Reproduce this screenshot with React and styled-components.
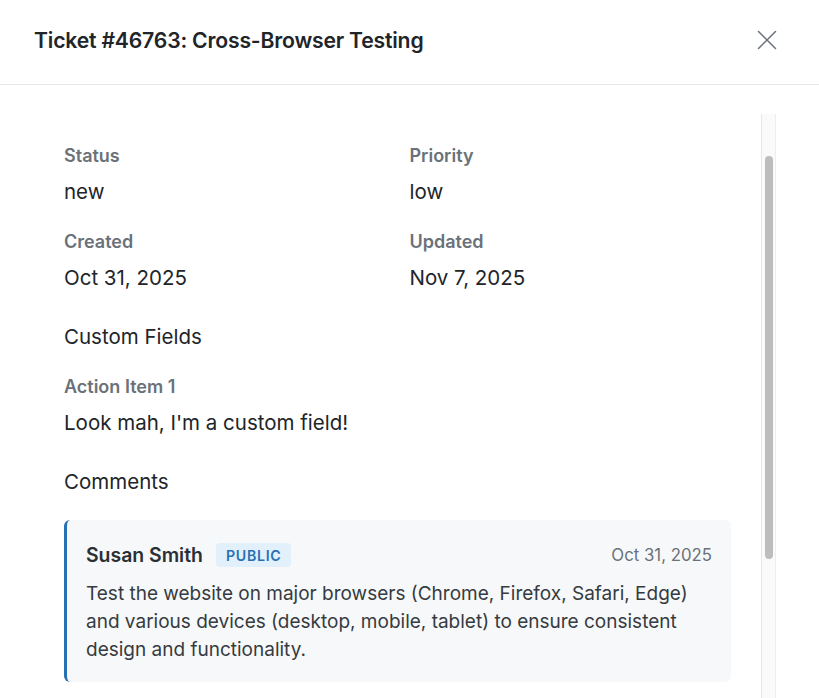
import React from "react";
import styled, { createGlobalStyle } from "styled-components";

const GlobalStyle = createGlobalStyle`
  html, body {
    margin: 0;
    padding: 0;
    background: #ffffff;
    font-family: "Inter", "Noto Sans", sans-serif;
    -webkit-font-smoothing: antialiased;
  }
  * { box-sizing: border-box; }
`;

const Modal = styled.div`
  display: flex;
  flex-direction: column;
  height: 100vh;
  overflow: hidden;
  background: #ffffff;
`;

const Header = styled.header`
  display: flex;
  align-items: center;
  justify-content: space-between;
  height: 85px;
  padding: 0 42px 5px 34px;
  border-bottom: 1px solid #e6e7e9;
  flex-shrink: 0;
`;

const Title = styled.h1`
  margin: 0;
  font-size: 21.2px;
  font-weight: 600;
  color: #212529;
  letter-spacing: -0.2px;
`;

const CloseButton = styled.button`
  display: flex;
  align-items: center;
  justify-content: center;
  width: 20px;
  height: 20px;
  padding: 0;
  border: none;
  background: none;
  color: #6b7178;
  cursor: pointer;
`;

const Body = styled.div`
  flex: 1;
  min-height: 0;
  display: flex;
  padding: 29px 43px 0 34px;
`;

const Scroller = styled.div`
  flex: 1;
  min-width: 0;
  overflow: hidden;
`;

// drawn scrollbar, as the page shows it
const ScrollTrack = styled.div`
  width: 15px;
  flex-shrink: 0;
  background: #fafafa;
  border-left: 1px solid #e6e6e6;
  border-right: 1px solid #eeeeee;
`;

const ScrollThumb = styled.div`
  width: 8px;
  height: 403px;
  margin: 42px 0 0 3px;
  border-radius: 4px;
  background: #bdbdbd;
`;

const Content = styled.div`
  padding: 31px 30px 40px 30px;
`;

const FieldGrid = styled.div`
  display: grid;
  grid-template-columns: 1fr 1fr;
  column-gap: 24px;
  row-gap: 26px;
`;

const Field = styled.div`
  display: flex;
  flex-direction: column;
  gap: 12px;
`;

const Label = styled.div`
  font-size: 18px;
  line-height: 22px;
  font-weight: 600;
  color: #6a7179;
`;

const Value = styled.div`
  font-size: 20.5px;
  line-height: 26px;
  color: #212529;
`;

const SectionTitle = styled.h2`
  margin: 33px 0 ${(p) => p.$bottom || "26px"};
  font-size: 20.5px;
  line-height: 26px;
  font-weight: 400;
  color: #212529;
`;

const CommentCard = styled.div`
  background: #f7f8f9;
  border-left: 3px solid #2870b4;
  border-radius: 6px;
  padding: 23px 19px 18px 19px;
`;

const CommentHead = styled.div`
  display: flex;
  align-items: center;
  gap: 13px;
  height: 24px;
  margin-bottom: 13px;
`;

const Author = styled.span`
  font-size: 19.4px;
  font-weight: 600;
  color: #2a2f35;
`;

const Badge = styled.span`
  display: flex;
  align-items: center;
  height: 24px;
  padding: 0 10px;
  border-radius: 4px;
  background: #e2f0fb;
  color: #2870b4;
  font-size: 14.2px;
  font-weight: 600;
  letter-spacing: 0.7px;
`;

const CommentDate = styled.span`
  margin-left: auto;
  font-size: 16.8px;
  color: #6a7179;
`;

const CommentText = styled.p`
  margin: 0;
  font-size: 19px;
  line-height: 28px;
  color: #353b41;
`;

const CloseIcon = () => (
  <svg width="20" height="20" viewBox="0 0 20 20" fill="none">
    <path d="M1.5 1.5L18.5 18.5M18.5 1.5L1.5 18.5" stroke="currentColor" strokeWidth="1.5" strokeLinecap="round" />
  </svg>
);

const fields = [
  { label: "Status", value: "new" },
  { label: "Priority", value: "low" },
  { label: "Created", value: "Oct 31, 2025" },
  { label: "Updated", value: "Nov 7, 2025" },
];

const comments = [
  {
    author: "Susan Smith",
    visibility: "Public",
    date: "Oct 31, 2025",
    text: "Test the website on major browsers (Chrome, Firefox, Safari, Edge) and various devices (desktop, mobile, tablet) to ensure consistent design and functionality.",
  },
];

const App = () => {
  return (
    <Modal>
      <GlobalStyle />
      <Header>
        <Title>Ticket #46763: Cross-Browser Testing</Title>
        <CloseButton aria-label="Close">
          <CloseIcon />
        </CloseButton>
      </Header>
      <Body>
        <Scroller>
          <Content>
            <FieldGrid>
              {fields.map((f) => (
                <Field key={f.label}>
                  <Label>{f.label}</Label>
                  <Value>{f.value}</Value>
                </Field>
              ))}
            </FieldGrid>

            <SectionTitle>Custom Fields</SectionTitle>
            <Field>
              <Label>Action Item 1</Label>
              <Value>Look mah, I'm a custom field!</Value>
            </Field>

            <SectionTitle $bottom="25px">Comments</SectionTitle>
            {comments.map((c, i) => (
              <CommentCard key={i}>
                <CommentHead>
                  <Author>{c.author}</Author>
                  <Badge>{c.visibility.toUpperCase()}</Badge>
                  <CommentDate>{c.date}</CommentDate>
                </CommentHead>
                <CommentText>{c.text}</CommentText>
              </CommentCard>
            ))}
          </Content>
        </Scroller>
        <ScrollTrack>
          <ScrollThumb />
        </ScrollTrack>
      </Body>
    </Modal>
  );
};

export default App;
